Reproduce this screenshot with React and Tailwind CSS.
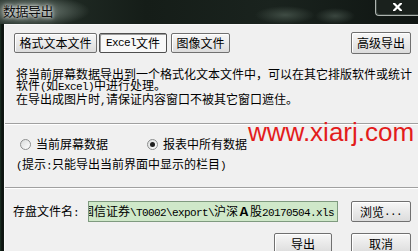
const MONO = "[font-family:'Liberation_Mono',monospace] text-[11px] tracking-[-0.6px]";

function M({ children }) {
  return <span className={MONO}>{children}</span>;
}

function Btn({ className = "", pressed = false, children }) {
  return (
    <div
      className={`flex items-center justify-center rounded-[2px] border text-[12px] leading-[12px] text-black ${
        pressed
          ? "border-[#4f4f4f] bg-[#f8f8f8] shadow-[inset_1px_1px_0_#9a9a9a]"
          : "border-[#707070] bg-linear-to-b from-[#f7f7f7] to-[#dcdcdc] shadow-[inset_1px_1px_0_#ffffff]"
      } ${className}`}
    >
      {children}
    </div>
  );
}

function Radio({ checked }) {
  return (
    <div className="flex h-[11px] w-[11px] items-center justify-center rounded-full border border-[#8c8e8e] bg-linear-to-br from-[#d9dbdb] to-[#ffffff]">
      {checked ? <div className="h-[5px] w-[5px] rounded-full bg-[#1e1e1e]" /> : null}
    </div>
  );
}

function Sep() {
  return (
    <div className="flex flex-col">
      <div className="h-px bg-[#a0a0a0]" />
      <div className="h-px bg-white" />
    </div>
  );
}

export default function App() {
  return (
    <div className="relative h-[251px] w-[418px] overflow-hidden bg-[#f0f0f0] text-black [font-family:'Noto_Sans_CJK_SC',sans-serif]">
      {/* title bar */}
      <div className="flex h-[24px] items-start justify-between bg-[radial-gradient(ellipse_60px_16px_at_30px_11px,#7d8981_0%,#4a564f_55%,transparent_100%),radial-gradient(ellipse_30px_9px_at_285px_15px,#3f4c44_0%,transparent_100%),radial-gradient(ellipse_20px_8px_at_335px_16px,#3a463f_0%,transparent_100%),linear-gradient(90deg,#27332c_0%,#151d18_35%,#1a231e_65%,#0f1512_100%)]">
        <div className="pl-[3px] pt-[4px] text-[13px] leading-[14px] tracking-[-0.5px] text-[#0e0e0e] [text-shadow:0_0_6px_#ffffff,0_0_3px_#e8ece9]">
          数据导出
        </div>
        <div className="flex h-[16px] w-[43px] items-center justify-center rounded-bl-[4px] border-b border-l border-[#aeb4b0] bg-[#1a211d] shadow-[inset_1px_-1px_0_#3b443f]">
          <svg width="9" height="8" viewBox="0 0 9 8" className="mb-[2px]">
            <path d="M1 0.5 L8 7.5 M8 0.5 L1 7.5" stroke="#ffffff" strokeWidth="2.2" strokeLinecap="square" />
          </svg>
        </div>
      </div>

      {/* body */}
      <div className="flex h-[227px]">
        <div className="w-[4px] bg-linear-to-r from-[#1d3326] via-[#0b120e] to-[#101a14]" />
        <div className="flex flex-1 flex-col border-l border-t border-[#f9f9f9]">
          {/* tabs row */}
          <div className="mt-[7px] flex h-[22px] items-center pl-[9px] pr-[7px]">
            <Btn className="h-[20px] w-[83px]">格式文本文件</Btn>
            <Btn pressed className="ml-[2px] h-[20px] w-[68px]">
              <M>Excel</M>文件
            </Btn>
            <Btn className="ml-[4px] h-[20px] w-[59px]">图像文件</Btn>
            <Btn className="ml-auto h-[22px] w-[60px]">高级导出</Btn>
          </div>

          {/* description */}
          <div className="mt-[14px] flex flex-col pl-[11px] text-[12px] leading-[11px] whitespace-nowrap">
            <div>将当前屏幕数据导出到一个格式化文本文件中，可以在其它排版软件或统计</div>
            <div>
              软件<M>(</M>如<M>Excel)</M>中进行处理。
            </div>
            <div>
              在导出成图片时<M>,</M>请保证内容窗口不被其它窗口遮住。
            </div>
          </div>

          <div className="mt-[16px]">
            <Sep />
          </div>

          {/* radios */}
          <div className="mt-[13px] flex h-[12px] items-center pl-[15px] text-[12px] leading-[12px]">
            <Radio />
            <span className="ml-[5px]">当前屏幕数据</span>
            <div className="ml-[39px]">
              <Radio checked />
            </div>
            <span className="ml-[5px]">报表中所有数据</span>
          </div>

          {/* hint */}
          <div className="mt-[8px] pl-[11px] text-[12px] leading-[12px] whitespace-nowrap">
            <M>(</M>提示<M>:</M>只能导出当前界面中显示的栏目<M>)</M>
          </div>

          <div className="mt-[15px]">
            <Sep />
          </div>

          {/* file row */}
          <div className="mt-[12px] flex h-[21px] items-center pl-[8px] pr-[7px] text-[12px] leading-[12px]">
            <div className="w-[75px]">
              存盘文件名<M>:</M>
            </div>
            <div className="flex h-[21px] w-[250px] items-center justify-end overflow-hidden whitespace-nowrap border border-[#7f9a7f] bg-[#cfe8c9] pr-[3px]">
              <span className="shrink-0">
                国信证券<M>\T0002\export\</M>沪深<b>Ａ</b>股<M>20170504.xls</M>
              </span>
            </div>
            <Btn className="ml-auto h-[21px] w-[60px]">
              浏览<M>...</M>
            </Btn>
          </div>

          {/* action row */}
          <div className="mt-[11px] flex h-[21px] items-center justify-end pr-[7px]">
            <Btn className="h-[21px] w-[58px]">导出</Btn>
            <Btn className="ml-[19px] h-[21px] w-[60px]">取消</Btn>
          </div>
        </div>
      </div>

      {/* watermark */}
      <div className="absolute left-[248px] top-[119px] text-[26px] leading-[26px] text-[#e31c1c] [font-family:'Liberation_Sans',Arial,sans-serif]">
        www.xiarj.com
      </div>
    </div>
  );
}
